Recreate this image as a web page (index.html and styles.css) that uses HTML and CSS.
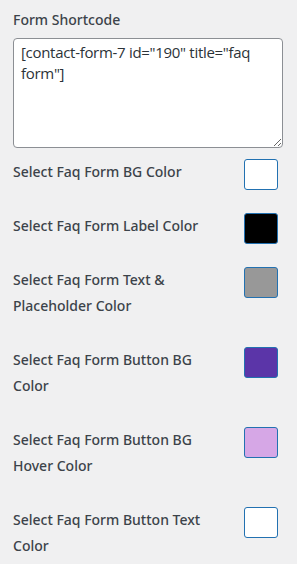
FILE: index.html
```html
<!DOCTYPE html>
<html lang="en">
<head>
    <meta charset="UTF-8">
    <meta name="viewport" content="width=device-width, initial-scale=1.0">
    <title>Faq Form Settings</title>
    <link rel="stylesheet" href="styles.css">
</head>
<body>

    <div class="settings">

        <label class="field-label" for="shortcode">Form Shortcode</label>
        <textarea id="shortcode" class="shortcode" rows="4">[contact-form-7 id="190" title="faq form"]</textarea>

        <div class="colors">
            <div class="color-row">
                <span class="color-label">Select Faq Form BG Color</span>
                <span class="swatch swatch-white"></span>
            </div>
            <div class="color-row">
                <span class="color-label">Select Faq Form Label Color</span>
                <span class="swatch swatch-black"></span>
            </div>
            <div class="color-row">
                <span class="color-label">Select Faq Form Text &amp; Placeholder Color</span>
                <span class="swatch swatch-gray"></span>
            </div>
            <div class="color-row">
                <span class="color-label">Select Faq Form Button BG Color</span>
                <span class="swatch swatch-purple"></span>
            </div>
            <div class="color-row">
                <span class="color-label">Select Faq Form Button BG Hover Color</span>
                <span class="swatch swatch-lilac"></span>
            </div>
            <div class="color-row">
                <span class="color-label">Select Faq Form Button Text Color</span>
                <span class="swatch swatch-white"></span>
            </div>
        </div>

    </div>

</body>
</html>
```

FILE: styles.css
```css
/* General Styles */
body {
    margin: 0;
    padding: 0;
    font-family: 'Noto Sans', 'Open Sans', sans-serif;
    background-color: #f0f0f1;
    color: #3c434a;
}

.settings {
    width: 270px;
    padding: 7px 14px 0 13px;
}

.field-label {
    display: block;
    font-size: 14px;
    font-weight: 500;
    line-height: 26px;
    margin-bottom: 5px;
}

/* Shortcode textarea */
.shortcode {
    display: block;
    box-sizing: border-box;
    width: 100%;
    height: 110px;
    margin: 0 0 11px 0;
    padding: 3px 7px;
    border: 1px solid #8c8f94;
    border-radius: 4px;
    background-color: #fff;
    color: #2c3338;
    font-family: 'Open Sans', 'Noto Sans', sans-serif;
    font-size: 15px;
    letter-spacing: -0.3px;
    line-height: 21px;
    resize: vertical;
}

.colors {
    display: flex;
    flex-direction: column;
    gap: 28px;
}

.color-row {
    display: flex;
    align-items: flex-start;
    justify-content: space-between;
}

.color-label {
    max-width: 212px;
    font-size: 14px;
    font-weight: 500;
    line-height: 26px;
}

.swatch {
    box-sizing: border-box;
    width: 34px;
    height: 31px;
    margin-right: 5px;
    margin-bottom: -5px; /* swatch is taller than one text line */
    border: 1px solid #2271b1;
    border-radius: 3px;
}

.swatch-white { background-color: #fff; }
.swatch-black { background-color: #000; }
.swatch-gray { background-color: #989898; }
.swatch-purple { background-color: #5b35a8; }
.swatch-lilac { background-color: #d6a7e6; }
```
